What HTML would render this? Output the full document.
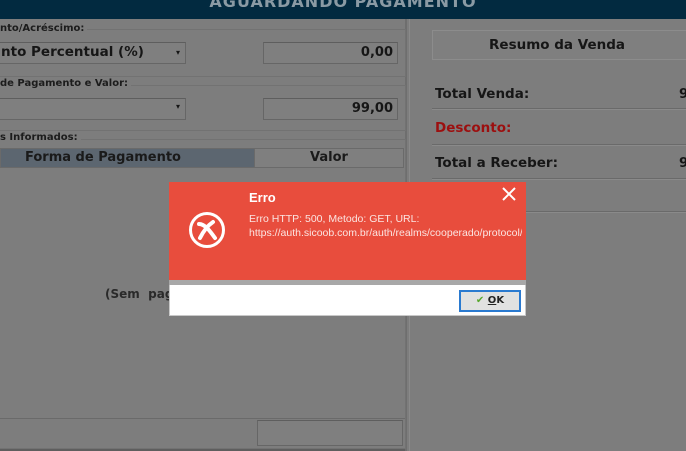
<!DOCTYPE html>
<html><head><meta charset="utf-8"><style>
*{margin:0;padding:0;box-sizing:border-box}
body{width:686px;height:451px;overflow:hidden;background:#7d7d7d;font-family:"DejaVu Sans","Liberation Sans",sans-serif;position:relative;color:#161616}
.a{position:absolute}
.hdr{left:0;top:0;width:686px;height:19px;background:#022a40}
.ttl{left:0;width:686px;top:-8px;text-align:center;color:#8a9aa4;font-weight:bold;font-size:16px;letter-spacing:1px}
.grp{border:1px solid #727272;border-left:none}
.lbl{font-size:10px;font-weight:bold;color:#1c1c1c;background:#7d7d7d;padding-right:3px}
.box{border:1px solid #666;background:#7f7f7f;border-top-color:#5e5e5e}
.val{font-size:13px;font-weight:bold;text-align:right;padding-right:4px;line-height:19px}
.line{height:2px;background:#6a6a6a;border-bottom:1px solid #8a8a8a}
.rt{font-size:13.5px;font-weight:bold}
</style></head><body>
<div class="a hdr"></div>
<div class="a ttl">AGUARDANDO PAGAMENTO</div>
<div class="a" style="left:405px;top:19px;width:2px;height:432px;background:#6e6e6e"></div>
<div class="a" style="left:409px;top:19px;width:1px;height:432px;background:#8a8a8a"></div>

<div class="a grp" style="left:0;top:29px;width:406px;height:48px"></div>
<div class="a lbl" style="left:0;top:23px">nto/Acréscimo:</div>
<div class="a box" style="left:-2px;top:42px;width:188px;height:22px;font-size:13.5px;font-weight:bold;padding-left:2px;line-height:19px">nto Percentual (%)<span style="position:absolute;right:5px;top:0;font-size:8px">▾</span></div>
<div class="a box val" style="left:263px;top:42px;width:135px;height:22px">0,00</div>

<div class="a grp" style="left:0;top:85px;width:406px;height:46px"></div>
<div class="a lbl" style="left:0;top:78px">de Pagamento e Valor:</div>
<div class="a box" style="left:-2px;top:98px;width:188px;height:22px"><span style="position:absolute;right:5px;top:3px;font-size:8px">▾</span></div>
<div class="a box val" style="left:263px;top:98px;width:135px;height:22px">99,00</div>

<div class="a grp" style="left:0;top:139px;width:406px;height:310px"></div>
<div class="a lbl" style="left:0;top:132px">s Informados:</div>
<div class="a" style="left:0;top:148px;width:255px;height:20px;background:#5c6670;border:1px solid #6a6a6a;font-size:13px;font-weight:bold;text-align:left;padding-left:24px;line-height:18px;color:#1a1a1a">Forma de Pagamento</div>
<div class="a" style="left:254px;top:148px;width:150px;height:20px;background:#7f7f7f;border:1px solid #6a6a6a;font-size:13px;font-weight:bold;text-align:center;line-height:18px;color:#1a1a1a">Valor</div>
<div class="a" style="left:105px;top:287px;font-size:12px;font-weight:bold;color:#2a2a2a">(Sem&nbsp; pagamentos)</div>
<div class="a" style="left:0;top:418px;width:405px;height:1px;background:#6a6a6a"></div>
<div class="a box" style="left:257px;top:420px;width:146px;height:26px"></div>
<div class="a" style="left:0;top:449px;width:405px;height:2px;background:#5e5e5e"></div>

<div class="a box" style="left:432px;top:30px;width:260px;height:30px;font-size:13.5px;font-weight:bold;text-align:center;line-height:29px;padding-right:10px;border-color:#8c8c8c">Resumo da Venda</div>
<div class="a rt" style="left:435px;top:86px">Total Venda:</div>
<div class="a rt" style="left:679px;top:86px">9</div>
<div class="a line" style="left:432px;top:108px;width:254px"></div>
<div class="a rt" style="left:435px;top:120px;color:#9c0f0f">Desconto:</div>
<div class="a line" style="left:432px;top:144px;width:254px"></div>
<div class="a rt" style="left:435px;top:155px">Total a Receber:</div>
<div class="a rt" style="left:679px;top:155px">9</div>
<div class="a line" style="left:432px;top:178px;width:254px"></div>
<div class="a line" style="left:432px;top:211px;width:254px"></div>

<div class="a" style="left:169px;top:182px;width:357px;height:134px;background:#fff;border:1px solid #c8c8c8"></div>
<div class="a" style="left:169px;top:182px;width:357px;height:98px;background:#e84d3d"></div>
<div class="a" style="left:169px;top:280px;width:357px;height:5px;background:#a8a8a8"></div>
<svg class="a" style="left:188px;top:211px" width="38" height="38" viewBox="0 0 38 38"><circle cx="19" cy="19" r="16.5" fill="none" stroke="#fff" stroke-width="3"/><path d="M11 13 C17 13 22 20 27 27 M25 11 C19 15 15 21 12 27" stroke="#fff" stroke-width="4" fill="none" stroke-linecap="round"/></svg>
<div class="a" style="left:249px;top:190px;color:#fff;font-weight:bold;font-size:13px;font-family:'Liberation Sans',sans-serif">Erro</div>
<div class="a" style="left:249px;top:212px;font-family:'Liberation Sans',sans-serif;font-size:10.5px;line-height:14px;width:273px;white-space:nowrap;overflow:hidden;color:#fbe5e2">Erro HTTP: 500, Metodo: GET, URL:<br>https://auth.sicoob.com.br/auth/realms/cooperado/protocol/</div>
<svg class="a" style="left:501px;top:186px" width="16" height="16"><path d="M2 2L14 14M14 2L2 14" stroke="#fff" stroke-width="2"/></svg>
<div class="a" style="left:459px;top:290px;width:62px;height:22px;background:#e1e1e1;border:2px solid #2a7ad0;font-size:10px;font-weight:bold;text-align:center;line-height:18px;color:#222"><span style="color:#5aa830">✔</span> <u>O</u>K</div>
</body></html>
